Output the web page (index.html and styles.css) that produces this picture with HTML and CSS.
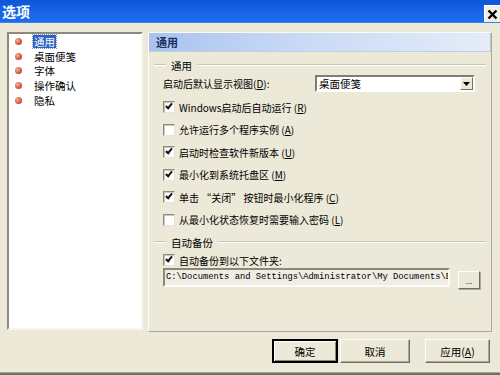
FILE: index.html
```html
<!DOCTYPE html>
<html lang="zh-CN">
<head>
<meta charset="utf-8">
<title>选项</title>
<link rel="stylesheet" href="styles.css">
</head>
<body>
<div class="window">
  <div class="titlebar">
    <span class="title">选项</span>
    <span class="close">
      <svg width="11" height="11" viewBox="0 0 11 11"><path d="M1.5 1.5 L9.5 9.5 M9.5 1.5 L1.5 9.5" stroke="#000" stroke-width="2.4" fill="none"/></svg>
    </span>
  </div>
  <div class="main">
    <div class="nav">
      <div class="nav-item"><span class="ball"></span><span class="nav-text selected">通用</span></div>
      <div class="nav-item"><span class="ball"></span><span class="nav-text">桌面便笺</span></div>
      <div class="nav-item"><span class="ball"></span><span class="nav-text">字体</span></div>
      <div class="nav-item"><span class="ball"></span><span class="nav-text">操作确认</span></div>
      <div class="nav-item"><span class="ball"></span><span class="nav-text">隐私</span></div>
    </div>
    <div class="panel">
      <div class="panel-header">通用</div>
      <div class="panel-body">
        <div class="group-title g1"><span class="line short"></span><span class="gt-text">通用</span><span class="line long"></span></div>
        <div class="select-row">
          <span class="label">启动后默认显示视图(<u>D</u>):</span>
          <div class="select">
            <span class="select-text">桌面便笺</span>
            <span class="select-btn"><svg width="7" height="4" viewBox="0 0 7 4"><path d="M0 0 H7 L3.5 4 Z" fill="#000"/></svg></span>
          </div>
        </div>
        <div class="check-list">
          <div class="check-row"><span class="box checked"></span><span class="ctext">Windows启动后自动运行 (<u>R</u>)</span></div>
          <div class="check-row"><span class="box"></span><span class="ctext">允许运行多个程序实例 (<u>A</u>)</span></div>
          <div class="check-row"><span class="box checked"></span><span class="ctext">启动时检查软件新版本 (<u>U</u>)</span></div>
          <div class="check-row"><span class="box checked"></span><span class="ctext">最小化到系统托盘区 (<u>M</u>)</span></div>
          <div class="check-row"><span class="box checked"></span><span class="ctext">单击 “关闭” 按钮时最小化程序 (<u>C</u>)</span></div>
          <div class="check-row"><span class="box"></span><span class="ctext">从最小化状态恢复时需要输入密码 (<u>L</u>)</span></div>
        </div>
        <div class="group-title g2"><span class="line short"></span><span class="gt-text">自动备份</span><span class="line long"></span></div>
        <div class="check-row small"><span class="box checked"></span><span class="ctext">自动备份到以下文件夹:</span></div>
        <div class="path-row">
          <div class="path">C:\Documents and Settings\Administrator\My Documents\E</div>
          <div class="browse">...</div>
        </div>
      </div>
    </div>
  </div>
  <div class="footer">
    <div class="btn default">确定</div>
    <div class="btn cancel">取消</div>
    <div class="btn apply">应用(<u>A</u>)</div>
  </div>
  <div class="bottom-edge"></div>
</div>
</body>
</html>
```

FILE: styles.css
```css
html, body {
  margin: 0;
  padding: 0;
}
body {
  width: 500px;
  height: 375px;
  overflow: hidden;
  font-family: "Noto Sans CJK SC", "Liberation Sans", sans-serif;
  font-size: 10px;
  color: #000;
}
.window {
  width: 500px;
  height: 375px;
  background: #ece9d8;
  display: flex;
  flex-direction: column;
}
.titlebar {
  height: 22px;
  flex: none;
  background: linear-gradient(#0b57d8, #1966e6 60%, #1e6cec);
  display: flex;
  align-items: center;
  justify-content: space-between;
  border-bottom: 1px solid #3a80f0;
}
.title {
  color: #fff;
  font-weight: bold;
  font-size: 14px;
  padding-left: 2px;
  line-height: 22px;
}
.close {
  width: 15px;
  height: 16px;
  margin-top: 5px;
  background: #f2efe6;
  border-left: 1px solid #fff;
  border-top: 1px solid #fff;
  display: flex;
  align-items: center;
  justify-content: center;
}
.main {
  display: flex;
  gap: 5px;
  padding: 9px 8px 0 7px;
  height: 300px;
  flex: none;
}
.nav {
  width: 132px;
  height: 294px;
  background: #fff;
  border-top: 2px solid #8c8a7e;
  border-left: 2px solid #8c8a7e;
  border-right: 2px solid #f7f6f0;
  border-bottom: 2px solid #f7f6f0;
  padding-top: 0;
  display: flex;
  flex-direction: column;
}
.nav-item {
  height: 14.7px;
  display: flex;
  align-items: center;
  font-size: 10.5px;
}
.ball {
  width: 7px;
  height: 7px;
  border-radius: 50%;
  margin-left: 6px;
  margin-right: 11px;
  background: radial-gradient(circle at 35% 35%, #f3b59c, #d2603e 55%, #9a3418);
}
.nav-text {
  line-height: 13px;
  padding: 0 1px;
}
.nav-text.selected {
  background: #2f63c0;
  color: #fff;
  outline: 1px dotted #7d9ad8;
}
.panel {
  width: 342px;
  height: 298px;
  border: 1px solid;
  border-color: #fbfaf6 #aca899 #aca899 #fbfaf6;
  display: flex;
  flex-direction: column;
}
.panel-header {
  height: 18px;
  line-height: 18px;
  padding-left: 7px;
  font-size: 11px;
  font-weight: bold;
  color: #1a2e62;
  background: linear-gradient(90deg, #a9c3ee, #c9daf5 45%, #e4ecf9);
  border-bottom: 1px solid #c3cde0;
  border-right: 1px solid #b8c4dc;
}
.panel-body {
  padding-left: 14px;
  display: flex;
  flex-direction: column;
}
.group-title {
  height: 14px;
  display: flex;
  align-items: center;
  margin-left: -9px;
}
.g1 { margin-top: 6px; }
.g2 { margin-top: 4px; }
.line {
  height: 0;
  border-top: 1px solid #c9c6b6;
  border-bottom: 1px solid #fff;
}
.line.short { width: 12px; }
.line.long { width: 289px; flex: none; }
.g2 .line.long { width: 268px; }
.gt-text {
  padding: 0 5px;
  font-size: 10.5px;
}
.select-row {
  margin-top: 3px;
  height: 17px;
  display: flex;
  align-items: center;
}
.label {
  width: 152px;
}
.select {
  width: 156px;
  height: 13px;
  background: #fff;
  border: 2px solid;
  border-color: #807d72 #fff #fff #807d72;
  display: flex;
  align-items: center;
  justify-content: space-between;
}
.select-text {
  font-size: 10.5px;
  padding-left: 2px;
}
.select-btn {
  width: 13px;
  height: 13px;
  box-sizing: border-box;
  background: #ece9d8;
  border: 1px solid;
  border-color: #fff #716f64 #716f64 #fff;
  display: flex;
  align-items: center;
  justify-content: center;
}
.check-list {
  margin-top: 4px;
  display: flex;
  flex-direction: column;
}
.check-row {
  height: 22.5px;
  display: flex;
  align-items: center;
}
.check-row.small {
  height: 16px;
  margin-top: 3px;
}
.box {
  width: 10px;
  height: 10px;
  background: #fff;
  border: 1px solid;
  border-color: #8f8c80 #e5e3da #e5e3da #8f8c80;
  box-shadow: inset 1px 1px 0 #c9c6ba;
  margin-right: 4px;
  flex: none;
  position: relative;
}
.box.checked::after {
  content: "";
  position: absolute;
  left: 2px;
  top: 1px;
  width: 2px;
  height: 5px;
  border-right: 2px solid #111;
  border-bottom: 2px solid #111;
  transform: rotate(40deg);
  transform-origin: 50% 50%;
}
.box.checked::after {
  left: 3px;
  top: 0px;
}
.path-row {
  display: flex;
  align-items: flex-start;
  gap: 8px;
}
.path {
  width: 282px;
  height: 15px;
  line-height: 15px;
  border: 2px solid;
  border-color: #8a877b #fbfaf6 #fbfaf6 #8a877b;
  background: #f0eee4;
  font-family: "Liberation Mono", monospace;
  font-size: 8.8px;
  padding-left: 1px;
  white-space: nowrap;
  overflow: hidden;
}
.browse {
  margin-top: 3px;
  width: 20px;
  height: 16px;
  border: 1px solid;
  border-color: #fff #716f64 #716f64 #fff;
  box-shadow: 1px 1px 0 #aca899;
  font-size: 8px;
  text-align: center;
  line-height: 18px;
  color: #333;
}
.footer {
  display: flex;
  justify-content: flex-end;
  padding: 7px 10px 0 0;
  height: 24px;
  flex: none;
}
.btn {
  height: 24px;
  box-sizing: border-box;
  border: 1px solid;
  border-color: #fff #716f64 #716f64 #fff;
  box-shadow: inset -1px -1px 0 #aca899;
  display: flex;
  align-items: center;
  justify-content: center;
  font-size: 10.5px;
  background: #ece9d8;
}
.btn.default {
  width: 66px;
  border: 2px solid #000;
  box-shadow: inset 1px 1px 0 #fff, inset -1px -1px 0 #8a877b;
}
.btn.cancel {
  width: 70px;
  margin-left: 2px;
}
.btn.apply {
  width: 65px;
  margin-left: 15px;
}
.bottom-edge {
  margin-top: auto;
  height: 2px;
  border-top: 1px solid #aca899;
  background: #716f64;
}
```
